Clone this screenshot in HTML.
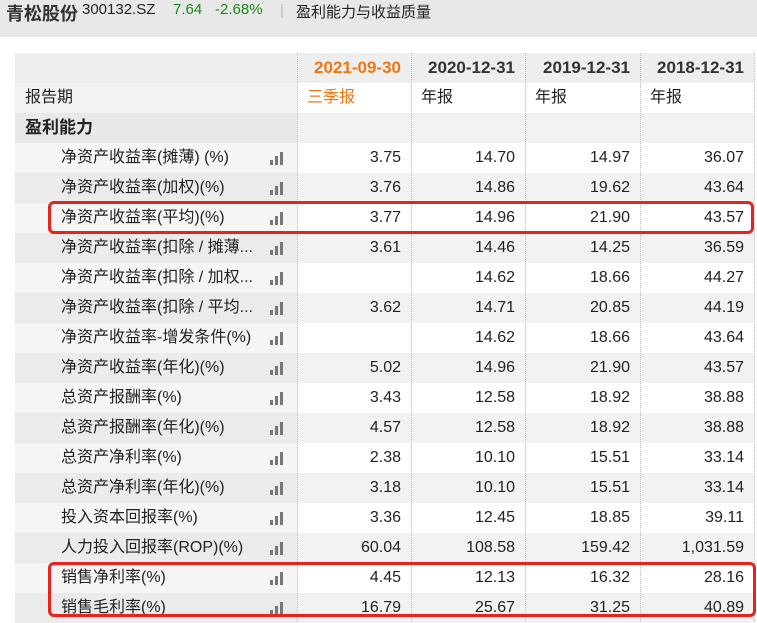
<!DOCTYPE html>
<html><head><meta charset="utf-8"><style>
body{margin:0;width:757px;height:622px;overflow:hidden;background:#fff;font-family:"Liberation Sans","Noto Sans CJK SC",sans-serif;color:#222;position:relative}
.top{position:absolute;left:0;top:0;width:757px;height:37px;background:#e8e8e8}
.top span{position:absolute;top:1px;font-size:15px;white-space:nowrap}
.row{position:absolute;left:15px;width:742px;height:30px}
.c{position:absolute;top:0;height:30px;line-height:30px;font-size:16px;white-space:nowrap}
.lab{left:0;width:282px}
.v{text-align:right;box-sizing:border-box;padding-right:10px}
.ico{position:absolute;left:255px;top:9px;width:16px;height:13px}
.ico i{position:absolute;bottom:0;width:3px;background:#777}
.dash{position:absolute;top:53px;height:569px;border-left:1px dotted #bbb}
.red{position:absolute;border:3px solid #e8231b;border-radius:6px;box-sizing:border-box}
</style></head><body>
<div class="top">
<span style="left:6px;font-size:18px;font-weight:bold;color:#333;top:0">青松股份</span>
<span style="left:82px">300132.SZ</span>
<span style="left:173px;color:#1a8a1a">7.64</span>
<span style="left:215px;color:#1a8a1a">-2.68%</span>
<span style="left:280px;top:2px;color:#bbb">|</span>
<span style="left:296px">盈利能力与收益质量</span>
</div>
<div id="t"></div>
<div class="dash" style="left:297px"></div>
<div class="dash" style="left:411px"></div>
<div class="dash" style="left:525px"></div>
<div class="dash" style="left:640px"></div>
<div class="dash" style="left:754px"></div>
<div class="red" style="left:48px;top:201px;width:706px;height:33px"></div>
<div class="red" style="left:48px;top:562px;width:708px;height:55px"></div>
<script>
var L=[296,410,524,639,753];
var h='';
function row(y,bgL,bgR,cells,lab,icon,bold,ind){
 h+='<div class="row" style="top:'+y+'px">';
 h+='<div class="c lab" style="background:'+bgL+';padding-left:'+ind+'px;box-sizing:border-box;'+(bold?'font-weight:bold;font-size:17px;':'')+'">'+lab;
 if(icon)h+='<div class="ico"><i style="left:0;height:5px"></i><i style="left:5px;height:9px"></i><i style="left:10px;height:13px"></i></div>';
 h+='</div>';
 for(var i=0;i<4;i++){var x=L[i]-15+1,w=L[i+1]-L[i];var cc=cells[i];
  h+='<div class="c '+(cc.r?'v':'')+'" style="left:'+x+'px;width:'+w+'px;background:'+bgR+';'+(cc.s?cc.s+';':'')+(cc.r?'':'padding-left:10px;box-sizing:border-box;')+'">'+cc.t+'</div>';}
 h+='</div>';
}
var hd=['2021-09-30','2020-12-31','2019-12-31','2018-12-31'];
row(53,'#eeeeee','#eeeeee',hd.map(function(t,i){return{t:t,r:1,s:'font-weight:bold;font-size:17px;color:'+(i?'#333':'#ee7711')}}),'',0,0,0);
row(83,'#f2f2f2','#fff',[{t:'三季报',s:'color:#ee7711'},{t:'年报'},{t:'年报'},{t:'年报'}],'报告期',0,0,10);
row(113,'#e8e8e8','#f2f2f2',[{t:''},{t:''},{t:''},{t:''}],'盈利能力',0,1,10);
var D=[['净资产收益率(摊薄) (%)','3.75','14.70','14.97','36.07'],
['净资产收益率(加权)(%)','3.76','14.86','19.62','43.64'],
['净资产收益率(平均)(%)','3.77','14.96','21.90','43.57'],
['净资产收益率(扣除 / 摊薄...','3.61','14.46','14.25','36.59'],
['净资产收益率(扣除 / 加权...','','14.62','18.66','44.27'],
['净资产收益率(扣除 / 平均...','3.62','14.71','20.85','44.19'],
['净资产收益率-增发条件(%)','','14.62','18.66','43.64'],
['净资产收益率(年化)(%)','5.02','14.96','21.90','43.57'],
['总资产报酬率(%)','3.43','12.58','18.92','38.88'],
['总资产报酬率(年化)(%)','4.57','12.58','18.92','38.88'],
['总资产净利率(%)','2.38','10.10','15.51','33.14'],
['总资产净利率(年化)(%)','3.18','10.10','15.51','33.14'],
['投入资本回报率(%)','3.36','12.45','18.85','39.11'],
['人力投入回报率(ROP)(%)','60.04','108.58','159.42','1,031.59'],
['销售净利率(%)','4.45','12.13','16.32','28.16'],
['销售毛利率(%)','16.79','25.67','31.25','40.89']];
D.forEach(function(d,k){var g=k%2;row(143+k*30,g?'#ebebeb':'#f5f5f5',g?'#f2f2f2':'#fff',d.slice(1).map(function(t){return{t:t,r:1}}),d[0],1,0,46);});
document.getElementById('t').innerHTML=h;
</script>
</body></html>
